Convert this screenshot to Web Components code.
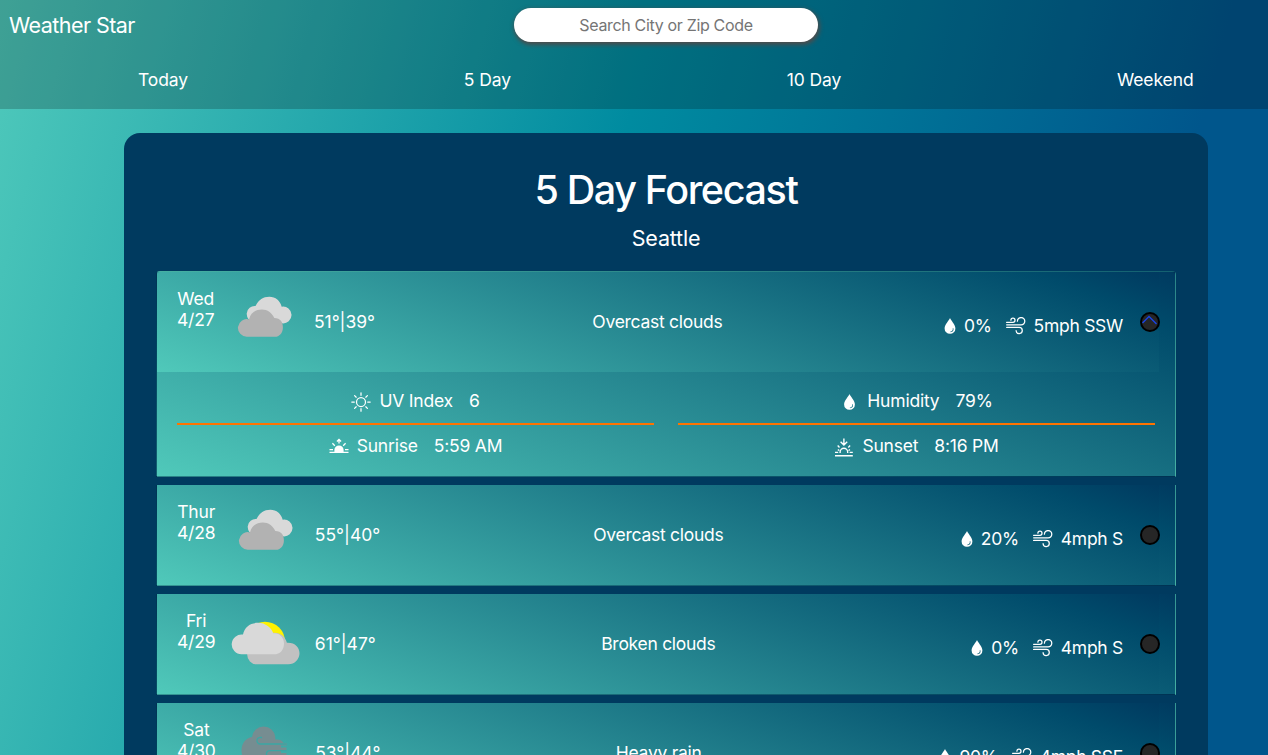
<!DOCTYPE html>
<html lang="en">
<head>
<meta charset="utf-8">
<title>Weather Star</title>
<style>
html, body { margin: 0; height: 755px; overflow: hidden; }
body {
  font-family: Inter, "Liberation Sans", sans-serif;
  font-size: 17.5px;
  letter-spacing: -0.28px;
  color: #fff;
  background: linear-gradient(105deg, #4fc9bb 0%, #008ba0 45%, #00568c 84%);
}
</style>
</head>
<body>
<weather-app></weather-app>
<script>
const ICONS = {
  drop: ['0 0 16 16', '<path fill="currentColor" fill-rule="evenodd" d="M8 0C7.2 2.2 2.6 6.8 2.6 10.4A5.3 5.3 0 0 0 8 15.8a5.3 5.3 0 0 0 5.4-5.4C13.4 6.8 8.8 2.2 8 0Zm3.300 10.200c.7 1.900-.3 3.800-2.600 4-.6 0-.6-.5-.1-.6 1.600-.4 2.300-1.500 2.200-3.200 0-.5.4-.6.5-.2Z"/>'],
  wind: ['0 0 20 18', '<g fill="none" stroke="currentColor" stroke-width="1.25" stroke-linecap="round"><path d="M.6 5.300H6.900A2.050 2.050 0 1 0 4.900 3.200"/><path d="M.6 7.900H14.900A3.700 3.700 0 1 0 11.400 4.200"/><path d="M.6 10.400H13.200A3.100 3.100 0 1 1 10.100 13.700"/></g>'],
  sun: ['0 0 20 20', '<g fill="none" stroke="currentColor" stroke-width="1.25" stroke-linecap="round"><circle cx="10" cy="10" r="4.500"/><path d="M10 .8V3.300M10 16.700V19.200M.8 10H3.300M16.700 10H19.200M3.600 3.600 5.200 5.200M14.800 14.800 16.400 16.400M16.400 3.600 14.800 5.200M5.200 14.800 3.600 16.400"/></g>'],
  sunrise: ['0 0 20 20', '<g stroke="currentColor" stroke-width="1.300" fill="none"><path d="M.5 15.300H19.500M.5 12.700H4M16 12.700H19.500M10 6.600V2.800M7.900 4.500 10 2.500 12.100 4.500M3.400 6.300 5.800 8.700M16.600 6.300 14.200 8.700"/></g><path fill="currentColor" d="M5.400 15.100V13.100a4.600 4.600 0 0 1 9.200 0v2Z"/>'],
  sunset: ['0 0 20 20', '<g stroke="currentColor" stroke-width="1.400" fill="none"><path d="M1 18.700H18.800M1 15.400H4.200M15.600 15.400H18.800M6.100 16V15.100a3.800 3.800 0 0 1 7.600 0V16M9.900 1.500V7.600M6.600 4.700 9.900 7.900 13.200 4.700M3.700 8.600 5.500 10.400M16.100 8.600 14.300 10.400M5.300 13.500 3.800 12.700M14.500 13.500 16 12.700"/></g>'],
  overcast: ['0 0 80 60', '<path fill="#d9d9d9" d="M29 37a8 8 0 0 1 1.500-16C34 14.500 38 11.700 44.300 11.700c6.400 0 10.900 4 12.400 10a8.400 8.400 0 1 1 .3 16.600Z"/><path fill="#b2b2b2" d="M22 51.700a8.800 8.800 0 1 1 2-17.300c1.700-6.700 6.700-10 12.700-10 6 0 10 3 12.600 8.600 6.300.3 8.600 4 8.600 9.400 0 5.700-3.600 9.300-8 9.300Z"/>'],
  broken: ['0 0 80 60', '<g transform="translate(-1.500 5.800)"><circle cx="40.500" cy="28.900" r="20" fill="#fff200"/><path fill="#c1c1c1" d="M32 51.500a9.500 9.500 0 0 1-9.300-9.500C23 32 36 19.500 50 20c6.500.2 10.700 4 12.400 10 8-.5 12.600 4.700 12.600 10.500a11 11 0 0 1-11 11Z"/><path fill="#d9d9d9" d="M17 41.500a9.900 9.900 0 1 1 1.500-19.700C20 14 26 10 33.500 10c7.500 0 13.500 5 15.300 10.600 6.200-.6 10.700 4.400 10.700 10 0 6.500-4 10.900-10 10.900Z"/></g>'],
  rain: ['0 0 80 60', '<path fill="#768d91" d="M26 48C19 46 15.500 41 15.500 34.500 15.500 27 20 22 26 21a11.700 11.700 0 0 1 23.300 0V23.500C53 23 56 24 57.500 27H60.500V29.500H55V31.500H60.500V34H55V37H60.500V42H52V48Z"/><g fill="none" stroke="#3ba6a4" stroke-width="1.300" stroke-linecap="round"><path d="M35.500 21.500C30 20.500 29.500 27.500 34 28H60"/><path d="M60 34.700H44C39.500 34.700 39.500 40 43 41"/></g>']
};

class WeatherIcon extends HTMLElement {
  constructor() { super(); this.attachShadow({ mode: 'open' }); }
  connectedCallback() {
    const [box, art] = ICONS[this.getAttribute('name')];
    this.shadowRoot.innerHTML = `<style>:host{display:block;flex:none;width:20px;height:20px}svg{display:block;width:100%;height:100%}</style><svg viewBox="${box}" aria-hidden="true">${art}</svg>`;
  }
}
customElements.define('weather-icon', WeatherIcon);

class WeatherHeader extends HTMLElement {
  constructor() {
    super();
    this.attachShadow({ mode: 'open' }).innerHTML = `
<style>
:host { display: block; height: 109px; background: rgba(0,0,0,.2); }
.bar { display: grid; grid-template-columns: 505px 304px; height: 34px; padding: 8px 0 0 9px; align-items: center; }
.brand { font-size: 21.5px; letter-spacing: -.55px; }
input { box-sizing: border-box; width: 304px; height: 34px; border: 0; border-radius: 17px; background: #fff; text-align: center;
  font: 16px Inter, sans-serif; letter-spacing: -.33px; box-shadow: 1px 2px 4px 1px #4c4c4c; padding: 0 8px; }
input::placeholder { color: #757575; opacity: 1; }
nav { display: flex; justify-content: space-between; padding: 27px 74.5px 0 138px; line-height: 22px; letter-spacing: -.1px; }
</style>
<div class="bar"><span class="brand">Weather Star</span><input placeholder="Search City or Zip Code"></div>
<nav><slot></slot></nav>`;
  }
}
customElements.define('weather-header', WeatherHeader);

class ForecastMetric extends HTMLElement {
  constructor() { super(); this.attachShadow({ mode: 'open' }); }
  connectedCallback() {
    this.shadowRoot.innerHTML = `
<style>
:host { display: flex; justify-content: center; align-items: center; height: 43px; gap: 8px; letter-spacing: -.2px; }
span, b { padding-bottom: 2px; }
b { font-weight: 400; margin-left: 8px; }
weather-icon[name=drop] { height: 16px; width: 19px; }
</style>
<weather-icon name="${this.getAttribute('icon')}"></weather-icon><span><slot></slot></span><b>${this.getAttribute('value')}</b>`;
  }
}
customElements.define('forecast-metric', ForecastMetric);

class ForecastDay extends HTMLElement {
  constructor() { super(); this.attachShadow({ mode: 'open' }); }
  connectedCallback() {
    const a = n => this.getAttribute(n);
    const open = this.hasAttribute('open');
    this.shadowRoot.innerHTML = `
<style>
:host { display: block; border: 1px solid rgba(0,0,0,.125); border-top-width: 0; background: var(--row-gradient); }
:host([open]) { border-top-width: 1px; border-top-left-radius: 4px; border-top-right-radius: 4px; }
.summary { position: relative; box-sizing: border-box; width: 1002px; height: 100px; display: grid;
  grid-template-columns: auto 80px 238px 250px 1fr; padding: 0 36px 0 20px; background: var(--row-gradient); }
:host([open]) .summary { border-top-left-radius: 3px; }
.date { min-width: 36px; padding-top: 16px; line-height: 21px; text-align: center; letter-spacing: -.2px; }
.pic { width: 80px; height: 60px; margin: 13px 0 0 10.500px; }
.temp { padding-top: 39px; padding-left: 19.500px; line-height: 22px; white-space: nowrap; letter-spacing: 0; }
.desc { padding-top: 39px; line-height: 22px; text-align: center; width: 250px; justify-self: start; }
.wx { display: flex; align-items: center; justify-content: flex-end; height: 22px; padding-top: 43px; white-space: nowrap; }
.wx span { padding-bottom: 2px; }
.wx weather-icon[name=drop] { width: 16px; height: 16px; margin-right: 6px; }
.wx weather-icon[name=wind] { width: 20px; height: 18px; margin: 0 7.500px 0 14.500px; }
.dot { position: absolute; left: 983px; top: 40px; box-sizing: border-box; width: 20px; height: 20px; border: 2px solid #000; border-radius: 50%; background: #262626; }
.dot svg { display: block; width: 16px; height: 16px; }
.details { display: grid; grid-template-columns: 1fr 1fr; column-gap: 24px; padding: 8px 20px 8px; height: 88px; }
.details > div > :first-child { border-bottom: 2px solid #ff7300; }
</style>
<div class="summary">
  <div class="date">${a('day')}<br>${a('date')}</div>
  <weather-icon class="pic" name="${a('icon')}"></weather-icon>
  <div class="temp">${a('temp')}</div>
  <div class="desc"><slot></slot></div>
  <div class="wx"><weather-icon name="drop"></weather-icon><span>${a('rain')}</span><weather-icon name="wind"></weather-icon><span>${a('wind')}</span></div>
  <div class="dot">${open ? '<svg viewBox="0 0 16 16"><path d="M.5 9 7 2.500l7.500 7.500" fill="none" stroke="#1a45e8" stroke-width="1.300"/></svg>' : ''}</div>
</div>
${open ? `<div class="details">
  <div><forecast-metric icon="sun" value="6">UV Index</forecast-metric><forecast-metric icon="sunrise" value="5:59 AM">Sunrise</forecast-metric></div>
  <div><forecast-metric icon="drop" value="79%">Humidity</forecast-metric><forecast-metric icon="sunset" value="8:16 PM">Sunset</forecast-metric></div>
</div>` : ''}`;
  }
}
customElements.define('forecast-day', ForecastDay);

class ForecastCard extends HTMLElement {
  constructor() {
    super();
    this.attachShadow({ mode: 'open' }).innerHTML = `
<style>
:host { display: block; box-sizing: border-box; width: 1084px; height: 760px; margin: 24px 0 0 124px; padding: 34px 32px 0; border-radius: 16px; background: #003a5f;
  --row-gradient: linear-gradient(20deg, #50c9ba, #004b6b 90%, #003a60); }
h1 { margin: 0; font-size: 39.500px; line-height: 47px; font-weight: 500; text-align: center; letter-spacing: -1.380px; }
.city { margin: 11px 0 19px; font-size: 21.500px; line-height: 27px; text-align: center; letter-spacing: -.2px; }
.days { display: flex; flex-direction: column; gap: 8px; }
</style>
<h1><slot name="title"></slot></h1>
<div class="city"><slot name="city"></slot></div>
<div class="days"><slot></slot></div>`;
  }
}
customElements.define('forecast-card', ForecastCard);

class WeatherApp extends HTMLElement {
  constructor() {
    super();
    this.attachShadow({ mode: 'open' }).innerHTML = `
<style>:host { display: block; height: 755px; overflow: hidden; }</style>
<weather-header><span>Today</span><span>5 Day</span><span>10 Day</span><span>Weekend</span></weather-header>
<forecast-card>
  <span slot="title">5 Day Forecast</span><span slot="city">Seattle</span>
  <forecast-day open day="Wed" date="4/27" icon="overcast" temp="51°|39°" rain="0%" wind="5mph SSW">Overcast clouds</forecast-day>
  <forecast-day day="Thur" date="4/28" icon="overcast" temp="55°|40°" rain="20%" wind="4mph S">Overcast clouds</forecast-day>
  <forecast-day day="Fri" date="4/29" icon="broken" temp="61°|47°" rain="0%" wind="4mph S">Broken clouds</forecast-day>
  <forecast-day day="Sat" date="4/30" icon="rain" temp="53°|44°" rain="90%" wind="4mph SSE">Heavy rain</forecast-day>
</forecast-card>`;
  }
}
customElements.define('weather-app', WeatherApp);
</script>
</body>
</html>
